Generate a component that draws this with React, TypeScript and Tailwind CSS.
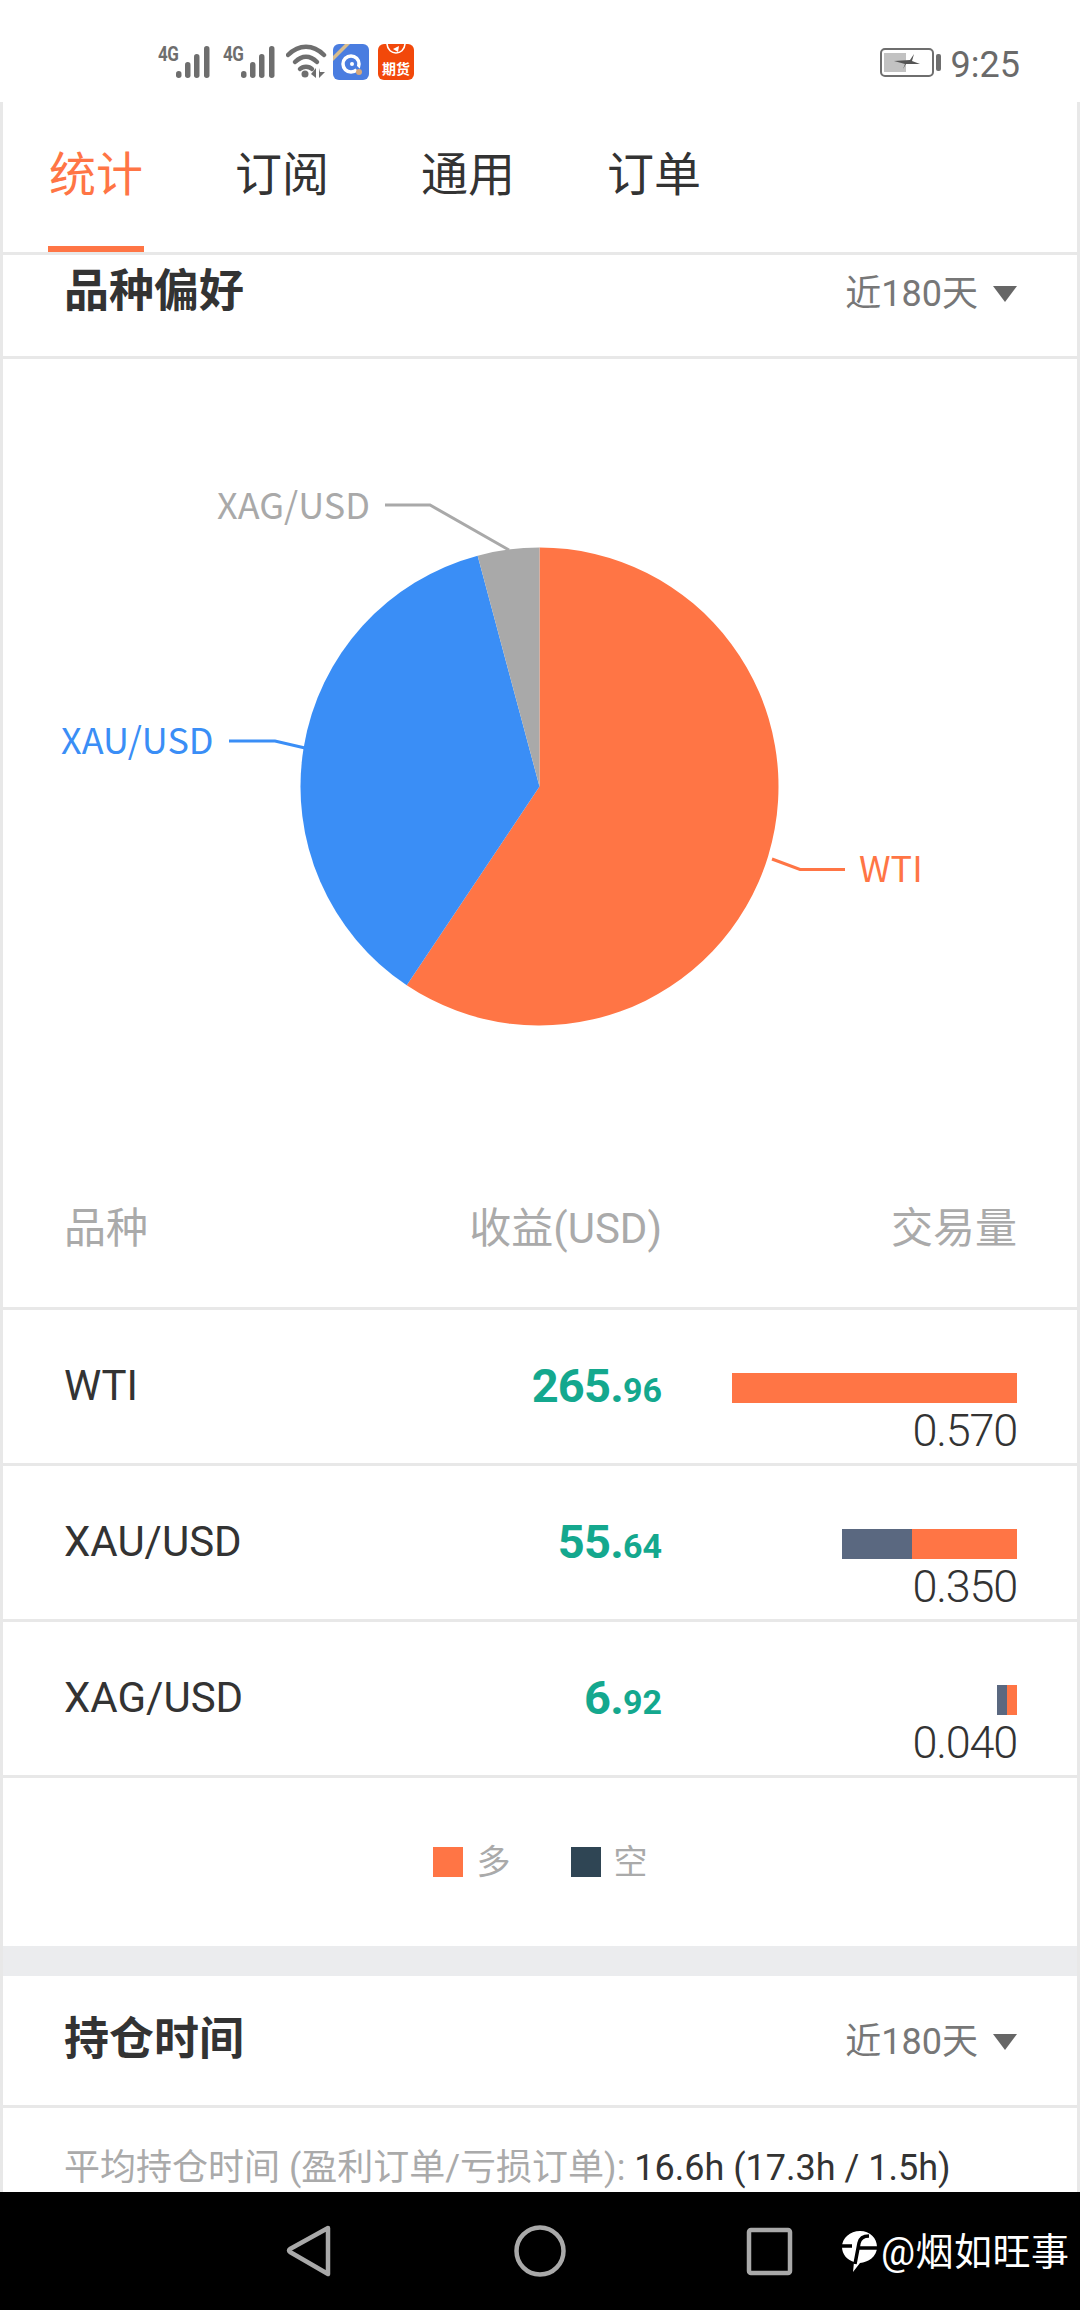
import React from "react";

function Signal() {
  return (
    <div className="relative w-[53px] h-[38px]">
      <span className="absolute left-0 top-[2px] text-[20px] leading-[16px] font-bold text-[#6e6e6e] font-['Roboto',sans-serif] tracking-[-0.5px] scale-x-[0.85] origin-left">4G</span>
      <svg width="53" height="38" viewBox="0 0 53 38" className="absolute left-0 top-0">
        <g fill="#6e6e6e">
          <rect x="18" y="27" width="5.5" height="7" rx="2.7" />
          <rect x="27" y="18" width="5.5" height="16" rx="2.7" />
          <rect x="36" y="10" width="5.5" height="24" rx="2.7" />
          <rect x="46" y="2" width="5.5" height="32" rx="2.7" />
        </g>
      </svg>
    </div>
  );
}

function Selector() {
  return (
    <div className="flex items-center gap-[15px] text-[36px] leading-[44px] text-[#777]">
      <span>近180天</span>
      <span className="w-0 h-0 border-x-[12px] border-x-transparent border-t-[16px] border-t-[#666]" />
    </div>
  );
}

function Bar({ blue, orange }: { blue: number; orange: number }) {
  return (
    <div className="flex h-[30px] justify-end">
      {blue > 0 && <div className="h-full bg-[#5a6880]" style={{ width: blue }} />}
      <div className="h-full bg-[#ff7545]" style={{ width: orange }} />
    </div>
  );
}

function Row({ name, big, small, blue, orange, vol }: { name: string; big: string; small: string; blue: number; orange: number; vol: string }) {
  return (
    <div className="flex h-[156px] pl-[61px] pr-[60px] border-b-[3px] border-[#e8e8e8]">
      <div className="flex-1 pt-[50px] text-[42px] leading-[52px] text-[#333] font-['Roboto','Noto_Sans_CJK_SC',sans-serif]">{name}</div>
      <div className="w-[260px] h-[110px] flex justify-end items-baseline pt-[49px] leading-[54px] font-bold text-[#14a88e] font-['Roboto',sans-serif]">
        <span className="text-[47px] tracking-[-0.8px]">{big}.</span>
        <span className="text-[34px]">{small}</span>
      </div>
      <div className="w-[355px] pt-[63px] flex flex-col">
        <Bar blue={blue} orange={orange} />
        <div className="text-right text-[45px] leading-[56px] font-light tracking-[-1.2px] text-[#333] font-['Roboto',sans-serif]">{vol}</div>
      </div>
    </div>
  );
}

function Pie() {
  const cx = 536.5, cy = 427.5, r = 239;
  const pt = (d: number) => {
    const a = (d * Math.PI) / 180;
    return `${(cx + r * Math.sin(a)).toFixed(2)} ${(cy - r * Math.cos(a)).toFixed(2)}`;
  };
  const top = pt(0), a1 = pt(213.75), a2 = pt(345);
  return (
    <svg width="1074" height="800" viewBox="0 0 1074 800" className="block">
      <path d={`M${cx} ${cy} L${top} A${r} ${r} 0 1 1 ${a1} Z`} fill="#ff7545" />
      <path d={`M${cx} ${cy} L${a1} A${r} ${r} 0 0 1 ${a2} Z`} fill="#3a8ef6" />
      <path d={`M${cx} ${cy} L${a2} A${r} ${r} 0 0 1 ${top} Z`} fill="#a9a9a9" />
      <g fill="none" strokeWidth="3">
        <path d="M382 146 H427 L506 191" stroke="#a9a9a9" />
        <path d="M226 382 H272 L302 389" stroke="#3a8ef6" />
        <path d="M769 500 L797 510.5 H842" stroke="#ff7545" />
      </g>
      <g fontSize="36" fontFamily="'Noto Sans CJK SC','Noto Sans',sans-serif">
        <text x="214" y="160" fill="#a9a9a9">XAG/USD</text>
        <text x="58" y="395" fill="#3a8ef6">XAU/USD</text>
        <text x="856" y="523" fill="#ff7545">WTI</text>
      </g>
    </svg>
  );
}

export default function App() {
  return (
    <div className="w-[1080px] h-[2310px] overflow-hidden flex flex-col bg-white font-['Roboto','Noto_Sans_CJK_SC',sans-serif]">
      {/* status bar */}
      <div className="h-[102px] shrink-0 relative flex pt-[44px] pl-[158px] pr-[60px]">
        <div className="flex gap-[12px] items-start">
          <Signal />
          <Signal />
        </div>
        <svg width="42" height="38" viewBox="0 0 42 38" className="ml-[10px]">
          <g fill="none" stroke="#6e6e6e" strokeWidth="4.5" strokeLinecap="round">
            <path d="M2 11 C13 0 27 0 38 11" />
            <path d="M9 18 C16 11 24 11 31 18" />
            <path d="M14 25 C17 22 23 22 26 25" />
          </g>
          <circle cx="19" cy="30" r="3.5" fill="#6e6e6e" />
          <path d="M30 24 V34 L25 30 Z M33 24 V34 L39 28 H34 Z" fill="#6e6e6e" />
        </svg>
        <div className="ml-[5px] w-[36px] h-[36px] rounded-[6px] bg-[#4a7de0] relative overflow-hidden">
          <svg width="36" height="36" viewBox="0 0 36 36" className="absolute inset-0">
            <path d="M0 12 L12 0 H17 L0 17 Z" fill="#d8bd8d" />
            <circle cx="18" cy="20" r="8" fill="none" stroke="#fff" strokeWidth="3.5" />
            <path d="M17 17 L26 26" stroke="#4a7de0" strokeWidth="3" />
            <circle cx="19" cy="20" r="2" fill="#fff" />
            <circle cx="26" cy="28" r="3" fill="#d8a878" />
          </svg>
        </div>
        <div className="ml-[9px] w-[36px] h-[36px] rounded-[6px] bg-[#f2480a] relative overflow-hidden flex items-end justify-center">
          <svg width="36" height="36" viewBox="0 0 36 36" className="absolute inset-0">
            <path d="M9 0 C10 12 26 12 27 0" fill="none" stroke="#fff" strokeWidth="1.6" />
            <path d="M15 5 L21 2 L20 8 Z" fill="#fff" />
          </svg>
          <span className="relative text-[14px] leading-[22px] font-bold text-white">期货</span>
        </div>
        <div className="ml-auto flex items-center h-[38px]">
          <svg width="62" height="30" viewBox="0 0 62 30">
            <rect x="1" y="1" width="52" height="27" rx="4" fill="none" stroke="#6e6e6e" strokeWidth="2" />
            <rect x="4" y="5" width="22" height="19" fill="#c2c2c2" />
            <path d="M14 13 L30 12 L34 6 L32 13 L40 16 L26 16 L23 21 L25 16 Z" fill="#555" />
            <rect x="56" y="6" width="5" height="17" rx="2" fill="#6e6e6e" />
          </svg>
          <span className="ml-[9px] pt-[4px] text-[36px] leading-[38px] text-[#6a6a6a]">9:25</span>
        </div>
      </div>

      {/* page */}
      <div className="flex-1 min-h-0 overflow-hidden border-x-[3px] border-[#e8e8e8] bg-white">
        <div className="h-[153px] flex pl-[45px] gap-[90px] border-b-[3px] border-[#e8e8e8] text-[47px] text-[#333]">
          <div className="w-[96px] h-[150px] flex items-center justify-center pt-[3px] border-b-[6px] border-[#ff7545] text-[#ff7545]">统计</div>
          <div className="w-[96px] h-[150px] flex items-center justify-center pt-[3px] pb-[6px]">订阅</div>
          <div className="w-[96px] h-[150px] flex items-center justify-center pt-[3px] pb-[6px]">通用</div>
          <div className="w-[96px] h-[150px] flex items-center justify-center pt-[3px] pb-[6px]">订单</div>
        </div>

        <div className="h-[104px] flex justify-between items-start pl-[61px] pr-[60px] border-b-[3px] border-[#e8e8e8]">
          <div className="text-[45px] leading-[60px] font-bold text-[#333] mt-[7px]">品种偏好</div>
          <div className="mt-[17px]"><Selector /></div>
        </div>

        <Pie />

        <div className="h-[151px] flex items-start pl-[61px] pr-[60px] border-b-[3px] border-[#e8e8e8] text-[42px] leading-[56px] text-[#aaa]">
          <div className="flex-1 pt-[42px]">品种</div>
          <div className="w-[260px] pt-[42px] text-right">收益(USD)</div>
          <div className="w-[355px] pt-[42px] text-right">交易量</div>
        </div>

        <Row name="WTI" big="265" small="96" blue={0} orange={285} vol="0.570" />
        <Row name="XAU/USD" big="55" small="64" blue={70} orange={105} vol="0.350" />
        <Row name="XAG/USD" big="6" small="92" blue={10} orange={10} vol="0.040" />

        <div className="h-[168px] flex justify-center pt-[69px]">
          <div className="flex items-center h-[30px] text-[34px] text-[#aaa]">
            <span className="w-[30px] h-[30px] bg-[#ff7545]" />
            <span className="ml-[14px]">多</span>
            <span className="ml-[60px] w-[30px] h-[30px] bg-[#2f4554]" />
            <span className="ml-[13px]">空</span>
          </div>
        </div>

        <div className="h-[30px] bg-[#ebecee]" />

        <div className="h-[132px] flex justify-between items-center pl-[61px] pr-[60px] border-b-[3px] border-[#e8e8e8]">
          <div className="text-[45px] leading-[60px] font-bold text-[#333] -mt-[1px]">持仓时间</div>
          <div className="mt-[2px]"><Selector /></div>
        </div>

        <div className="pl-[61px] pt-[36px] text-[36px] leading-[48px] whitespace-nowrap">
          <span className="text-[#aaa]">平均持仓时间 (盈利订单/亏损订单): </span>
          <span className="text-[#333]">16.6h (17.3h / 1.5h)</span>
        </div>
      </div>

      {/* nav bar */}
      <div className="h-[118px] shrink-0 bg-black relative flex items-center">
        <svg width="800" height="118" viewBox="0 0 800 118" className="shrink-0">
          <g fill="none" stroke="#a9a9a9" strokeWidth="4.5" strokeLinejoin="round">
            <path d="M328 36 L290 57 Q288 58.5 290 60 L328 82 Z" />
            <circle cx="540" cy="59" r="23.5" />
            <rect x="749" y="38" width="41" height="43" rx="2" />
          </g>
        </svg>
        <div className="absolute left-[842px] top-[40px] flex items-center h-[40px]">
          <svg width="36" height="42" viewBox="0 0 36 42">
            <path d="M18 0 C28 0 35 7 35 16 C35 26 26 31 18 32 L11 41 L12 31 C5 29 0 23 0 16 C0 7 8 0 18 0 Z" fill="#fff" />
            <path d="M0 15 H10 M16 17 H35 M13 33 L17 12 C18 7 22 5 27 5" stroke="#000" strokeWidth="3.5" fill="none" />
          </svg>
          <span className="ml-[3px] text-[38px] leading-[40px] tracking-[0.5px] text-white whitespace-nowrap">@烟如旺事</span>
        </div>
      </div>
    </div>
  );
}
